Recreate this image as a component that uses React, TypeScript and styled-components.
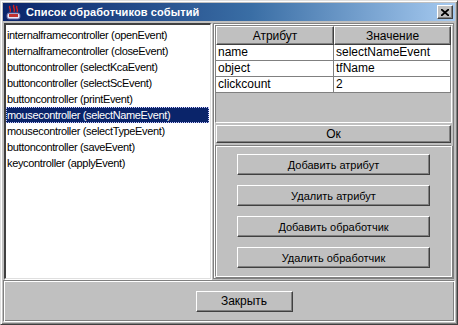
import React from "react";
import styled, { createGlobalStyle } from "styled-components";

const GlobalStyle = createGlobalStyle`
  html, body {
    margin: 0;
    padding: 0;
    background: #c0c0c0;
  }
  body {
    font-family: "Liberation Sans", Arial, sans-serif;
    font-size: 12px;
    color: #000;
  }
`;

const raised = `
  border-top: 1px solid #ffffff;
  border-left: 1px solid #ffffff;
  border-right: 1px solid #404040;
  border-bottom: 1px solid #404040;
  box-shadow: inset -1px -1px 0 #808080;
`;

const sunken = `
  border-top: 1px solid #808080;
  border-left: 1px solid #808080;
  border-right: 1px solid #fff;
  border-bottom: 1px solid #fff;
`;

const Window = styled.div`
  width: 458px;
  height: 325px;
  box-sizing: border-box;
  background: #c0c0c0;
  border-top: 1px solid #dfdfdf;
  border-left: 1px solid #dfdfdf;
  border-right: 1px solid #404040;
  border-bottom: 1px solid #404040;
  box-shadow: inset 1px 1px 0 #ffffff, inset -1px -1px 0 #808080;
  padding: 2px;
  display: flex;
  flex-direction: column;
`;

const TitleBar = styled.div`
  height: 18px;
  background: linear-gradient(to right, #0a246a 0%, #3a6ea5 55%, #a6caf0 100%);
  display: flex;
  align-items: center;
  padding: 0 2px 0 3px;
  gap: 4px;
`;

const Title = styled.span`
  flex: 1;
  color: #fff;
  font-weight: bold;
  font-size: 11px;
  letter-spacing: 0.1px;
  white-space: nowrap;
`;

const CloseBtn = styled.div`
  width: 16px;
  height: 14px;
  box-sizing: border-box;
  background: #c0c0c0;
  ${raised}
  display: flex;
  align-items: center;
  justify-content: center;
`;

const Main = styled.div`
  display: flex;
  height: 256px;
  margin-top: 2px;
  gap: 2px;
  padding: 0 1px;
`;

const ListPanel = styled.div`
  width: 207px;
  box-sizing: border-box;
  background: #fff;
  border-top: 2px solid #404040;
  border-left: 2px solid #404040;
  border-right: 1px solid #dfdfdf;
  border-bottom: 1px solid #dfdfdf;
  box-shadow: 1px 1px 0 #fff;
  padding-top: 2px;
`;

const ListItem = styled.div<{ $selected?: boolean }>`
  height: 16px;
  line-height: 16px;
  font-size: 11px;
  letter-spacing: -0.35px;
  padding-left: 1px;
  margin-right: 1px;
  white-space: nowrap;
  box-sizing: border-box;
  background: ${(p) => (p.$selected ? "#0a246a" : "transparent")};
  color: ${(p) => (p.$selected ? "#fff" : "#000")};
  outline: ${(p) => (p.$selected ? "1px dotted #c8c8ff" : "none")};
  outline-offset: -1px;
`;

const RightPanel = styled.div`
  flex: 1;
  display: flex;
  flex-direction: column;
  border: 1px solid #808080;
  box-shadow: inset 1px 1px 0 #fff;
  padding: 1px;
  gap: 2px;
`;

const TableScroll = styled.div`
  height: 98px;
  box-sizing: border-box;
  ${sunken}
`;

const Table = styled.div`
  display: grid;
  grid-template-columns: 118px 1fr;
`;

const HeaderCell = styled.div`
  height: 19px;
  box-sizing: border-box;
  ${raised}
  display: flex;
  align-items: center;
  justify-content: center;
  background: #c0c0c0;
`;

const Cell = styled.div`
  height: 16px;
  line-height: 15px;
  box-sizing: border-box;
  background: #fff;
  border-right: 1px solid #808080;
  border-bottom: 1px solid #808080;
  padding-left: 2px;
  white-space: nowrap;
`;

const WideButton = styled.div`
  height: 18px;
  box-sizing: border-box;
  ${raised}
  display: flex;
  align-items: center;
  justify-content: center;
  margin: 0 1px;
`;

const ActionPanel = styled.div`
  flex: 1;
  ${sunken}
  box-shadow: inset 1px 1px 0 #fff, 1px 1px 0 #808080;
  display: flex;
  flex-direction: column;
  align-items: center;
  padding-top: 8px;
  gap: 10px;
`;

const Button = styled.div<{ $width?: number; $small?: boolean }>`
  width: ${(p) => p.$width ?? 193}px;
  height: 21px;
  box-sizing: border-box;
  font-size: ${(p) => (p.$small ? 11 : 12)}px;
  ${raised}
  display: flex;
  align-items: center;
  justify-content: center;
`;

const Footer = styled.div`
  flex: 1;
  margin: 1px 0 0;
  ${sunken}
  box-shadow: inset 1px 1px 0 #fff, inset -1px -1px 0 #808080;
  display: flex;
  align-items: center;
  justify-content: center;
  padding-left: 30px;
`;

const items = [
  "internalframecontroller (openEvent)",
  "internalframecontroller (closeEvent)",
  "buttoncontroller (selectKcaEvent)",
  "buttoncontroller (selectScEvent)",
  "buttoncontroller (printEvent)",
  "mousecontroller (selectNameEvent)",
  "mousecontroller (selectTypeEvent)",
  "buttoncontroller (saveEvent)",
  "keycontroller (applyEvent)",
];

const rows: [string, string][] = [
  ["name", "selectNameEvent"],
  ["object", "tfName"],
  ["clickcount", "2"],
];

const actions = ["Добавить атрибут", "Удалить атрибут", "Добавить обработчик", "Удалить обработчик"];

const AppIcon = () => (
  <svg width="16" height="16" viewBox="0 0 16 16">
    <rect x="1" y="9" width="13" height="6" rx="2" fill="#e8e8f8" stroke="#6060a0" strokeWidth="1" />
    <path d="M4 2 C2 4 6 5 4 8 M8 1 C6 3 10 5 8 8 M11 2 C9 4 13 5 11 8" stroke="#d02020" strokeWidth="1.5" fill="none" />
    <path d="M3 10 h9 v3 h-9 z" fill="#c03030" />
  </svg>
);

export default function App() {
  return (
    <>
      <GlobalStyle />
      <Window>
        <TitleBar>
          <AppIcon />
          <Title>Список обработчиков событий</Title>
          <CloseBtn>
            <svg width="8" height="7" viewBox="0 0 8 7">
              <path d="M0 0 L8 7 M8 0 L0 7" stroke="#000" strokeWidth="1.8" />
            </svg>
          </CloseBtn>
        </TitleBar>
        <Main>
          <ListPanel>
            {items.map((it) => (
              <ListItem key={it} $selected={it === "mousecontroller (selectNameEvent)"}>
                {it}
              </ListItem>
            ))}
          </ListPanel>
          <RightPanel>
            <TableScroll>
              <Table>
                <HeaderCell>Атрибут</HeaderCell>
                <HeaderCell>Значение</HeaderCell>
                {rows.map(([k, v]) => (
                  <React.Fragment key={k}>
                    <Cell>{k}</Cell>
                    <Cell>{v}</Cell>
                  </React.Fragment>
                ))}
              </Table>
            </TableScroll>
            <WideButton>Ок</WideButton>
            <ActionPanel>
              {actions.map((a) => (
                <Button key={a} $small>
                  {a}
                </Button>
              ))}
            </ActionPanel>
          </RightPanel>
        </Main>
        <Footer>
          <Button $width={97}>Закрыть</Button>
        </Footer>
      </Window>
    </>
  );
}
